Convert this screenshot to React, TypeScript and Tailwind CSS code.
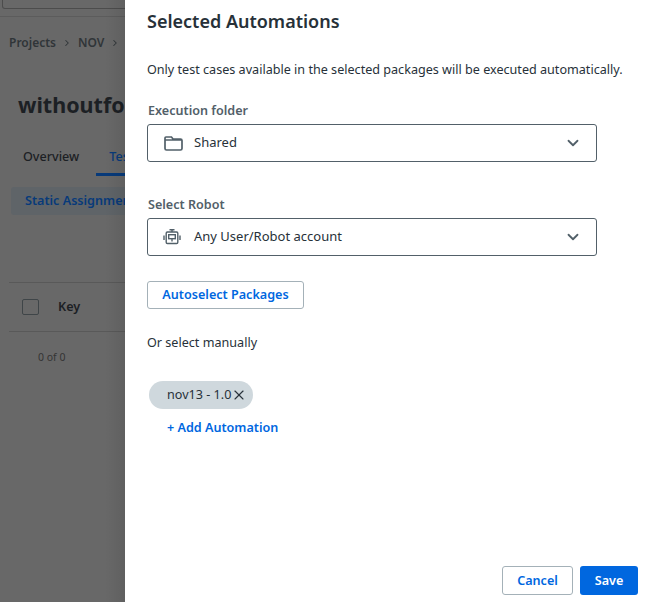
import { ChevronDown, ChevronRight, X } from 'lucide-react'

const font = { fontFamily: '"Noto Sans", sans-serif' }

function FolderIcon() {
  return (
    <svg width="19" height="16" viewBox="0 0 19 16" fill="none" stroke="#526069" strokeWidth="1.7" className="ml-[1px]">
      <path d="M1 3V13.5C1 14.3 1.7 15 2.5 15H16.5C17.3 15 18 14.3 18 13.5V5.5C18 4.7 17.3 4 16.5 4H9L7.5 2H2C1.4 2 1 2.4 1 3V5H18" />
    </svg>
  )
}

function RobotIcon() {
  return (
    <svg width="18" height="16" viewBox="0 0 18 16" fill="none" stroke="#526069" strokeWidth="1.4">
      <path d="M6.5 0.7H11.5M9 0.7V3" />
      <rect x="3.2" y="3" width="11.6" height="11.5" rx="1.2" />
      <rect x="5.7" y="5.7" width="6.6" height="4" />
      <path d="M9 9.7V12.5" />
      <path d="M1 6.5V11M17 6.5V11" />
    </svg>
  )
}

function Select({ icon, value }: { icon: React.ReactNode; value: string }) {
  return (
    <div className="flex h-[38px] w-[450px] items-center rounded-[3px] border border-[#526069] pl-[15px] pr-[14px]">
      <span className="flex w-[31px] items-center">{icon}</span>
      <span className="flex-1 text-[13px] text-[#273139]">{value}</span>
      <ChevronDown size={18} strokeWidth={2.4} className="text-[#526069]" />
    </div>
  )
}

function Background() {
  return (
    <div className="relative h-full w-[125px] shrink-0 overflow-hidden bg-[#686868]">
      <div className="h-[17px] w-[200px] border-b border-[#5c5c5c]">
        <div className="ml-[2px] h-[9px] rounded-b-[3px] border border-t-0 border-[#4c4c4c]" />
      </div>
      <div className="ml-[9px] mt-[17px] flex h-[18px] w-[116px] items-center gap-[6px] text-[12px] font-semibold text-[#303538]">
        <span>Projects</span>
        <ChevronRight size={10} strokeWidth={2.5} />
        <span>NOV</span>
        <ChevronRight size={10} strokeWidth={2.5} />
      </div>
      <div className="ml-[18px] mt-[38px] h-[30px] w-[107px] whitespace-nowrap text-[21.5px] font-bold leading-[30px] text-[#1c2024]">withoutfo</div>
      <div className="ml-[23px] mt-[28px] flex h-[18px] w-[200px] gap-[30px] text-[12.6px] leading-[18px]">
        <span className="font-medium text-[#1c2024]">Overview</span>
        <span className="font-medium text-[#073a7a]">Test Cases</span>
      </div>
      <div className="ml-[96px] mt-[7px] h-[3px] w-[60px] bg-[#073a7a]" />
      <div className="ml-[11px] mt-[11px] flex h-[28px] w-[200px] items-center rounded-[3px] bg-[#5f6468] pl-[14px] text-[12.6px] font-semibold text-[#073a7a]">
        Static Assignment
      </div>
      <div className="ml-[9px] mt-[67px] flex h-[50px] w-[200px] items-center border-y border-[#595959] pl-[13px]">
        <span className="h-[16px] w-[17px] rounded-[2px] border border-[#3f4548]" />
        <span className="ml-[19px] text-[12.6px] font-semibold text-[#1c2024]">Key</span>
      </div>
      <div className="ml-[38px] mt-[18px] text-[10.5px] text-[#343434]">0 of 0</div>
      <div className="absolute inset-y-0 right-0 w-[20px] bg-gradient-to-r from-transparent to-[#00000014]" />
    </div>
  )
}

export default function App() {
  return (
    <div className="flex h-[602px] w-[645px] overflow-hidden bg-white" style={font}>
      <Background />
      <div className="flex h-full flex-1 flex-col bg-white pl-[22px] pr-[7px]">
        <h1 className="mt-[8px] h-[26px] text-[18px] font-semibold leading-[26px] text-[#273139]">Selected Automations</h1>
        <p className="mt-[26px] h-[20px] text-[12.6px] leading-[20px] text-[#273139]">
          Only test cases available in the selected packages will be executed automatically.
        </p>
        <label className="ml-[1px] mt-[21px] h-[20px] text-[12.6px] font-semibold leading-[20px] text-[#526069]">Execution folder</label>
        <div className="mt-[3px]">
          <Select icon={<FolderIcon />} value="Shared" />
        </div>
        <label className="ml-[1px] mt-[33px] h-[20px] text-[12.6px] font-semibold leading-[20px] text-[#526069]">Select Robot</label>
        <div className="mt-[3px]">
          <Select icon={<RobotIcon />} value="Any User/Robot account" />
        </div>
        <button className="mt-[25px] flex h-[28px] w-[157px] items-center justify-center rounded-[3px] border border-[#a4b1b8] text-[12.6px] font-semibold text-[#0067df]">
          Autoselect Packages
        </button>
        <p className="mt-[24px] h-[20px] text-[12.6px] leading-[20px] text-[#273139]">Or select manually</p>
        <div className="ml-[2px] mt-[28px] flex h-[28px] w-[104px] items-center rounded-full bg-[#cfd8dd] pl-[18px] text-[12.6px] text-[#273139]">
          nov13 - 1.0
          <X size={16} strokeWidth={1.7} />
        </div>
        <button className="ml-[20px] mt-[9px] h-[20px] w-fit text-[12.6px] font-semibold leading-[20px] text-[#0067df]">+ Add Automation</button>
        <div className="mb-[7px] mt-auto flex justify-end gap-[7px]">
          <button className="h-[29px] w-[71px] rounded-[3px] border border-[#a4b1b8] pt-[1px] text-[12.6px] font-semibold text-[#0067df]">Cancel</button>
          <button className="h-[29px] w-[58px] rounded-[3px] bg-[#0067df] pt-[1px] text-[12.6px] font-semibold text-white">Save</button>
        </div>
      </div>
    </div>
  )
}
